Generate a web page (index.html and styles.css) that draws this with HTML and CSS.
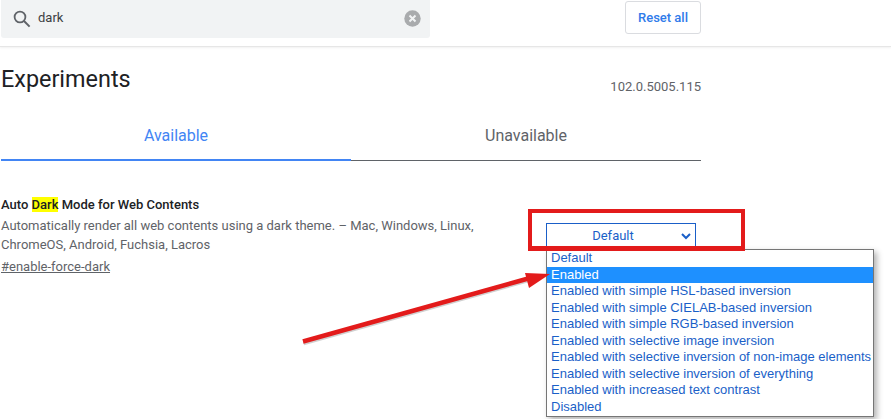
FILE: index.html
```html
<!DOCTYPE html>
<html lang="en">
<head>
<meta charset="utf-8">
<title>Experiments</title>
<link rel="stylesheet" href="styles.css">
</head>
<body>
<header class="topbar">
  <div class="search">
    <svg class="search-icon" width="18" height="18" viewBox="0 0 18 18"><circle cx="7" cy="7" r="5.4" fill="none" stroke="#5f6368" stroke-width="1.8"/><path d="M11 11l5.6 5.6" stroke="#5f6368" stroke-width="2" fill="none"/></svg>
    <span class="query">dark</span>
    <svg class="clear-icon" width="17" height="17" viewBox="0 0 17 17"><circle cx="8.5" cy="8.5" r="8.2" fill="#a9abad"/><path d="M5.5 5.5l6 6M11.5 5.5l-6 6" stroke="#f1f3f4" stroke-width="2" fill="none"/></svg>
  </div>
  <button class="reset">Reset all</button>
</header>
<main class="content">
  <div class="title-row">
    <h1 class="title">Experiments</h1>
    <span class="version">102.0.5005.115</span>
  </div>
  <div class="tabs">
    <div class="tab tab-active">Available</div>
    <div class="tab">Unavailable</div>
  </div>
  <section class="feature">
    <div class="feature-text">
      <h2 class="feature-name">Auto <mark class="hit">Dark</mark> Mode for Web Contents</h2>
      <p class="feature-desc">Automatically render all web contents using a dark theme. – Mac, Windows, Linux, ChromeOS, Android, Fuchsia, Lacros</p>
      <a class="feature-link" href="#enable-force-dark">#enable-force-dark</a>
    </div>
    <div class="select-wrap">
      <div class="select">
        <span class="select-label">Default</span>
        <svg class="chevron" width="10" height="7" viewBox="0 0 10 7"><path d="M1 1l4 4 4-4" fill="none" stroke="#1a5fc8" stroke-width="2"/></svg>
      </div>
      <ul class="menu">
        <li class="option">Default</li>
        <li class="option option-selected">Enabled</li>
        <li class="option">Enabled with simple HSL-based inversion</li>
        <li class="option">Enabled with simple CIELAB-based inversion</li>
        <li class="option">Enabled with simple RGB-based inversion</li>
        <li class="option">Enabled with selective image inversion</li>
        <li class="option">Enabled with selective inversion of non-image elements</li>
        <li class="option">Enabled with selective inversion of everything</li>
        <li class="option">Enabled with increased text contrast</li>
        <li class="option">Disabled</li>
      </ul>
    </div>
  </section>
</main>
<div class="callout-box"></div>
<svg class="callout-arrow" width="891" height="419" viewBox="0 0 891 419">
  <path d="M303.5 343L528 280" stroke="#8a8a8a" stroke-width="4.5" fill="none" opacity=".4"/>
  <path d="M303 341.5L530 278" stroke="#e31b1b" stroke-width="4.5" fill="none"/>
  <path d="M525 273L550 274L529 288Z" fill="#e31b1b"/>
</svg>
</body>
</html>
```
FILE: styles.css
```css
* { box-sizing: border-box; }
html, body { margin: 0; padding: 0; }
body {
  width: 891px;
  height: 419px;
  overflow: hidden;
  background: #fff;
  font-family: Roboto, "Liberation Sans", sans-serif;
  position: relative;
}
.topbar {
  height: 47px;
  padding-left: 1px;
  display: flex;
  align-items: flex-start;
  border-bottom: 1px solid #e6e6e6;
  box-shadow: 0 1px 2px rgba(0,0,0,.06);
}
.search {
  width: 429px;
  height: 38px;
  background: #f1f3f4;
  border-radius: 0 0 3px 3px;
  display: flex;
  align-items: center;
  padding: 0 9px 1px 12px;
}
.search-icon { flex: none; }
.query { margin-left: 7px; font-size: 13px; line-height: 15px; padding-bottom: 2px; color: #3c4043; flex: 1; }
.clear-icon { flex: none; }
.reset {
  margin: 1px 0 0 195px;
  width: 76px;
  height: 33px;
  background: #fff;
  border: 1px solid #dadce0;
  border-radius: 3px;
  color: #2f7bea;
  font: 500 13px Roboto, sans-serif;
  padding: 0;
}
.content { width: 700px; margin-left: 1px; }
.title-row {
  display: flex;
  justify-content: space-between;
  align-items: flex-start;
  height: 66px;
  padding-top: 17px;
}
.title { margin: 0; font-size: 23.4px; font-weight: 400; line-height: 30px; color: #202124; }
.version { margin-top: 15px; font-size: 13px; line-height: 16px; color: #5f6368; }
.tabs {
  display: flex;
  height: 48px;
  border-bottom: 1px solid #5f6368;
}
.tab {
  flex: 1;
  text-align: center;
  font-size: 16px;
  line-height: 46px;
  color: #5f6368;
}
.tab-active {
  color: #4285f4;
  height: 48px;
  border-bottom: 2px solid #4285f4;
}
.feature {
  position: relative;
  padding-top: 35px;
}
.feature-text { width: 500px; }
.feature-name { margin: 0; font-size: 13px; font-weight: 500; line-height: 18px; color: #202124; }
.hit { background: #ff0; color: inherit; }
.feature-desc { margin: 2px 0 0; font-size: 13px; line-height: 19px; color: #5f6368; }
.feature-link { display: block; margin-top: 4px; font-size: 13px; line-height: 18px; color: #5f6368; }
.select-wrap { position: absolute; left: 545px; top: 62px; }
.select {
  width: 150px;
  height: 26px;
  border: 1px solid #1a5fc8;
  border-bottom: 0;
  display: flex;
  align-items: center;
  justify-content: center;
  padding: 0 16px 2px 0;
  position: relative;
  color: #1a5fc8;
  font: 13px Roboto, sans-serif;
}
.chevron { position: absolute; right: 4px; top: 9px; }
.menu {
  position: absolute;
  left: 0;
  top: 26px;
  width: 328px;
  height: 168px;
  margin: 0;
  padding: 0;
  list-style: none;
  background: #fff;
  border: 1px solid #767676;
  box-shadow: 3px 3px 6px rgba(0,0,0,.3);
  font: 13px "Liberation Sans", Arial, sans-serif;
  color: #1a5fc8;
}
.option { height: 16.5px; line-height: 16.5px; padding-left: 4px; white-space: nowrap; }
.option-selected { background: #1e90ff; color: #fff; }
.callout-box {
  position: absolute;
  left: 528px;
  top: 209px;
  width: 217px;
  height: 42px;
  border: 4px solid #e31b1b;
  border-bottom-width: 5px;
}
.callout-arrow { position: absolute; left: 0; top: 0; pointer-events: none; }
```
